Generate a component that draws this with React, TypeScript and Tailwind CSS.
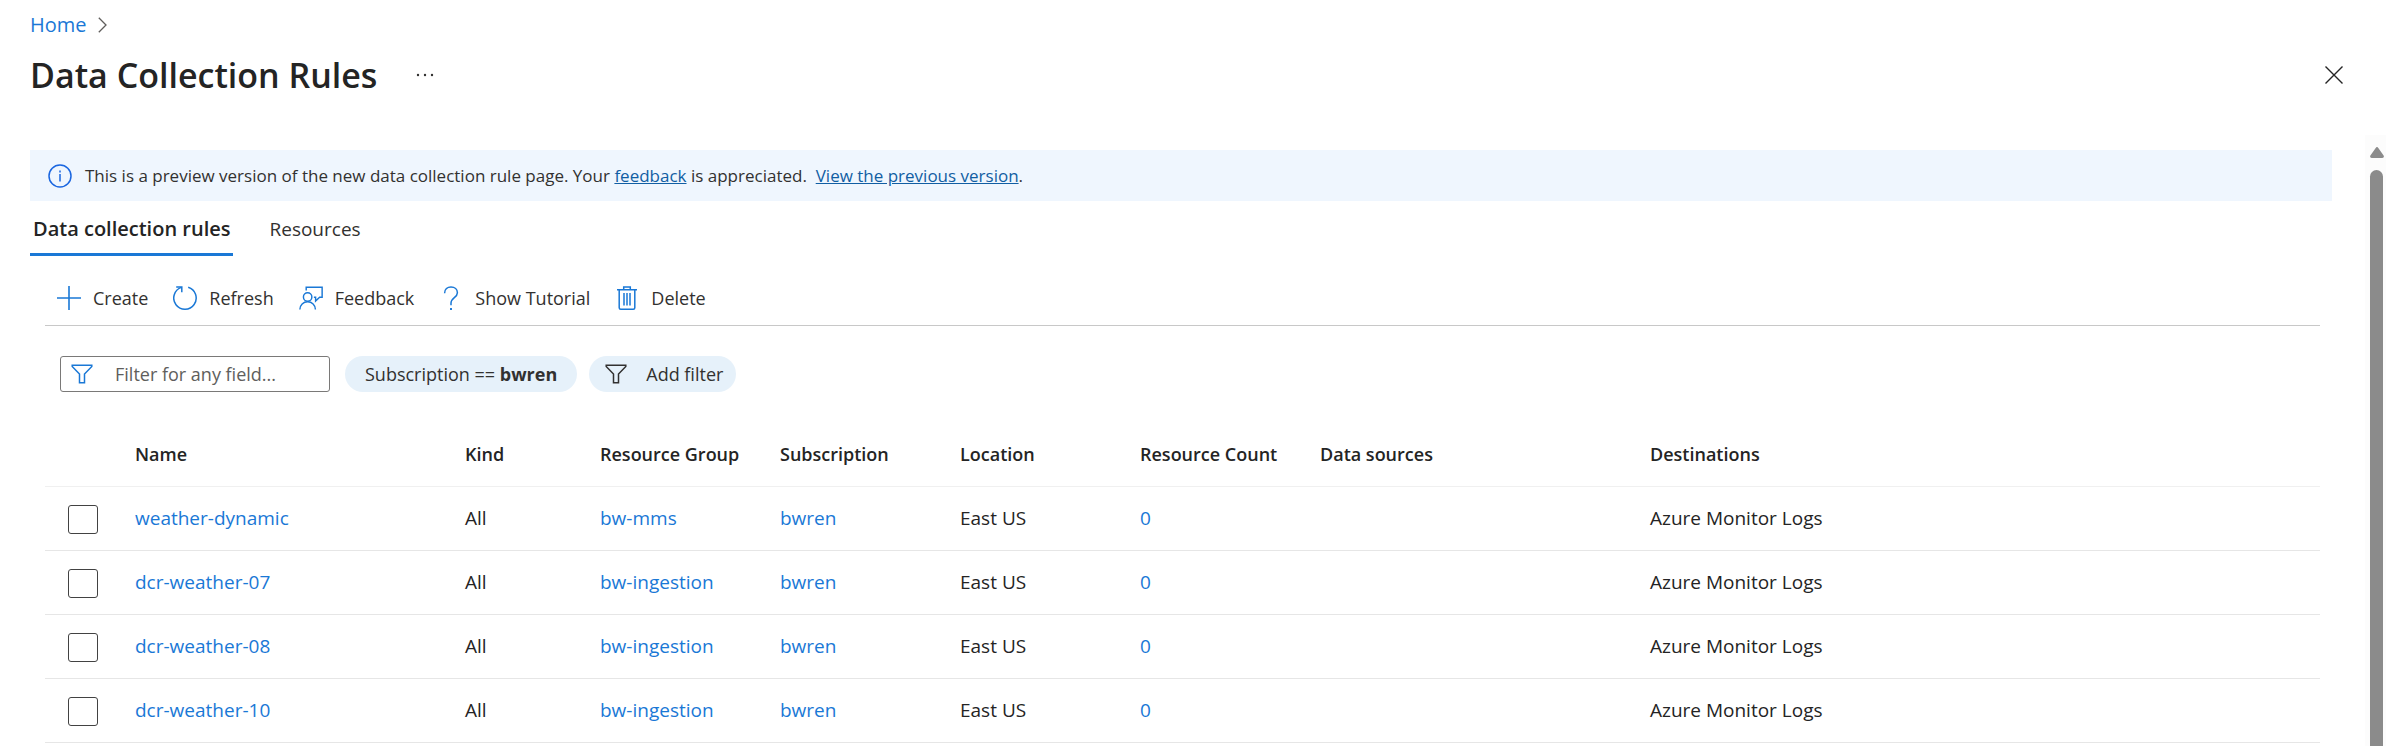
import React from "react";

type Rule = { name: string; group: string };

const rules: Rule[] = [
  { name: "weather-dynamic", group: "bw-mms" },
  { name: "dcr-weather-07", group: "bw-ingestion" },
  { name: "dcr-weather-08", group: "bw-ingestion" },
  { name: "dcr-weather-10", group: "bw-ingestion" },
];

const columns: { label: string; width: string }[] = [
  { label: "Name", width: "w-[330px]" },
  { label: "Kind", width: "w-[135px]" },
  { label: "Resource Group", width: "w-[180px]" },
  { label: "Subscription", width: "w-[180px]" },
  { label: "Location", width: "w-[180px]" },
  { label: "Resource Count", width: "w-[180px]" },
  { label: "Data sources", width: "w-[330px]" },
  { label: "Destinations", width: "w-auto" },
];

function FilterIcon({ className }: { className: string }) {
  return (
    <svg viewBox="0 0 22 20" className={`h-5 w-[22px] shrink-0 ${className}`} fill="none" stroke="currentColor" strokeWidth="1.5" aria-hidden="true">
      <path d="M1.2 1.2h19.6v1.2l-7.3 7.6v8.8h-5V10L1.2 2.4z" />
    </svg>
  );
}

function PlusIcon() {
  return (
    <svg viewBox="0 0 24 24" className="size-6" fill="none" stroke="currentColor" strokeWidth="1.6" aria-hidden="true">
      <path d="M12 0v24M0 12h24" />
    </svg>
  );
}

function RefreshIcon() {
  return (
    <svg viewBox="0 0 24 24" className="size-6" fill="none" stroke="currentColor" strokeWidth="1.5" aria-hidden="true">
      <path d="M15.2 1.3A11.2 11.2 0 1 1 8.4 1.4" />
      <path d="M3.2 1.1h5.6v5.2" />
    </svg>
  );
}

function FeedbackIcon() {
  return (
    <svg viewBox="0 0 25 24" className="size-6" fill="none" stroke="currentColor" strokeWidth="1.5" aria-hidden="true">
      <path d="M7.5 4.2V.9h16.6v10.4h-2.6l-4.2 3.9v-3.9h-1.8" />
      <circle cx="9" cy="11" r="4.4" />
      <path d="M.9 24a8.1 8.1 0 0 1 16.2 0" />
    </svg>
  );
}

function QuestionIcon() {
  return (
    <svg viewBox="0 0 16 24" className="h-6 w-4" fill="none" stroke="currentColor" strokeWidth="1.5" aria-hidden="true">
      <path d="M1.6 7.2C1.6 3.4 4.4.9 8 .9c3.7 0 6.4 2.3 6.4 5.8C14.4 11.7 8 11.5 8 17v2.2" />
      <path d="M8 22v2" strokeWidth="1.9" />
    </svg>
  );
}

function TrashIcon() {
  return (
    <svg viewBox="0 0 20 24" className="h-6 w-5" fill="none" stroke="currentColor" strokeWidth="1.5" aria-hidden="true">
      <path d="M0 3.7h20M6.7 3.7V1h6.6v2.7" />
      <path d="M2.2 3.7v18c0 .9.6 1.5 1.5 1.5h12.6c.9 0 1.5-.6 1.5-1.5v-18" />
      <path d="M7 7v12.5M10 7v12.5M13 7v12.5" />
    </svg>
  );
}

function ToolbarButton({ icon, label }: { icon: React.ReactNode; label: string }) {
  return (
    <button type="button" className="flex items-center gap-3 text-[#323130]">
      <span className="flex w-6 justify-center text-[#1a78d6]">{icon}</span>
      {label}
    </button>
  );
}

export default function App() {
  return (
    <div className="flex min-h-screen flex-col bg-white font-['Open_Sans','Noto_Sans',sans-serif] text-[19px] leading-7 text-[#242424]">
      <header className="h-[135px] px-[30px] pt-[11px]">
        <nav aria-label="Breadcrumb" className="flex items-center gap-[11px]">
          <a href="#home" className="text-[20px] text-[#1a78d6]">Home</a>
          <svg viewBox="0 0 9 16" className="h-4 w-[9px]" fill="none" stroke="#605e5c" strokeWidth="1.3" aria-hidden="true">
            <path d="M.8.8 8 8 .8 15.2" />
          </svg>
        </nav>
        <div className="flex h-[71px] items-center pr-[13px]">
          <h1 className="text-[34px] font-semibold leading-[46px]">Data Collection Rules</h1>
          <button type="button" aria-label="More options" className="ml-[35px] p-1">
            <svg viewBox="0 0 18 4" className="h-1 w-[18px]" fill="#323130" aria-hidden="true">
              <circle cx="2" cy="2" r="1.2" />
              <circle cx="9" cy="2" r="1.2" />
              <circle cx="16" cy="2" r="1.2" />
            </svg>
          </button>
          <button type="button" aria-label="Close" className="ml-auto">
            <svg viewBox="0 0 18 18" className="size-[18px]" fill="none" stroke="#242424" strokeWidth="1.4" aria-hidden="true">
              <path d="M.5.5l17 17M17.5.5l-17 17" />
            </svg>
          </button>
        </div>
      </header>

      <div className="flex flex-1">
        <main className="min-w-0 flex-1 pl-[30px] pt-[15px]">
          <div className="mr-[33px] flex h-[51px] items-center gap-[13px] bg-[#eff6fe] pl-[18px] text-[17px] text-[#323130]">
            <svg viewBox="0 0 24 24" className="size-6 shrink-0" fill="none" stroke="#1a66e0" strokeWidth="1.5" aria-hidden="true">
              <circle cx="12" cy="12" r="11" />
              <path d="M12 10v7.5M12 6.5v2" />
            </svg>
            <p>
              This is a preview version of the new data collection rule page. Your{" "}
              <a href="#feedback" className="text-[#115ea3] underline">feedback</a> is appreciated.&nbsp;{" "}
              <a href="#previous" className="text-[#115ea3] underline">View the previous version</a>.
            </p>
          </div>

          <div role="tablist" className="flex h-[55px] gap-8 text-[20px]">
            <button type="button" role="tab" aria-selected="true" className="border-b-3 border-[#1a78d6] px-[3px] pt-1 font-semibold">
              Data collection rules
            </button>
            <button type="button" role="tab" aria-selected="false" className="border-b-3 border-transparent px-1 pt-1 text-[19px] text-[#323130]">
              Resources
            </button>
          </div>

          <div className="ml-[15px] mr-[45px] text-[18px]">
            <div role="toolbar" aria-label="Rule actions" className="flex h-[70px] items-center gap-[25px] border-b border-[#c8c8c8] pl-3 pt-[15px]">
              <ToolbarButton icon={<PlusIcon />} label="Create" />
              <ToolbarButton icon={<RefreshIcon />} label="Refresh" />
              <ToolbarButton icon={<FeedbackIcon />} label="Feedback" />
              <ToolbarButton icon={<QuestionIcon />} label="Show Tutorial" />
              <ToolbarButton icon={<TrashIcon />} label="Delete" />
            </div>

            <div className="flex items-center pl-[15px] pt-[30px] text-[#323130]">
              <label className="flex h-9 w-[270px] items-center gap-[22px] rounded-[3px] border border-[#7a7978] pl-[10px]">
                <FilterIcon className="text-[#1a78d6]" />
                <input type="text" aria-label="Filter for any field" placeholder="Filter for any field..." className="w-full min-w-0 bg-transparent outline-none placeholder:text-[#605e5c]" />
              </label>
              <button type="button" className="ml-[15px] flex h-9 items-center rounded-full bg-[#e6f1fa] px-5">
                <span>Subscription == <b className="font-bold">bwren</b></span>
              </button>
              <button type="button" className="ml-3 flex h-9 items-center gap-[19px] rounded-full bg-[#e6f1fa] pl-4 pr-[13px]">
                <FilterIcon className="text-[#323130]" />
                Add filter
              </button>
            </div>

            <table className="mt-[30px] w-full table-fixed text-left">
              <thead>
                <tr className="h-16 border-b border-[#f0f0f0]">
                  <th className="w-[90px]" aria-label="Select"></th>
                  {columns.map((c) => (
                    <th key={c.label} className={`${c.width} font-semibold`}>{c.label}</th>
                  ))}
                </tr>
              </thead>
              <tbody className="text-[19px]">
                {rules.map((r) => (
                  <tr key={r.name} className="h-16 border-b border-[#e6e6e6]">
                    <td className="pl-[23px] pt-[2px]">
                      <input type="checkbox" aria-label={`Select ${r.name}`} className="block h-[29px] w-[30px] appearance-none rounded-[3px] border border-[#424242] bg-white" />
                    </td>
                    <td><a href="#rule" className="text-[#1a78d6]">{r.name}</a></td>
                    <td>All</td>
                    <td><a href="#group" className="text-[#1a78d6]">{r.group}</a></td>
                    <td><a href="#subscription" className="text-[#1a78d6]">bwren</a></td>
                    <td>East US</td>
                    <td><a href="#resources" className="text-[#1a78d6]">0</a></td>
                    <td></td>
                    <td>Azure Monitor Logs</td>
                  </tr>
                ))}
              </tbody>
            </table>
          </div>
        </main>

        <div aria-hidden="true" className="flex w-[21px] flex-col items-center bg-[#fcfcfc] pl-[2px] pt-3">
          <svg viewBox="0 0 14 11" className="h-[11px] w-[14px]" fill="#8b8b8b">
            <path d="M5.7.9a1.6 1.6 0 0 1 2.6 0l5.3 7.7c.7 1 .1 2.4-1.3 2.4H1.7C.3 11-.3 9.6.4 8.6z" />
          </svg>
          <div className="mt-3 w-[13px] flex-1 rounded-t-full bg-[#8b8b8b]" />
        </div>
      </div>
    </div>
  );
}
